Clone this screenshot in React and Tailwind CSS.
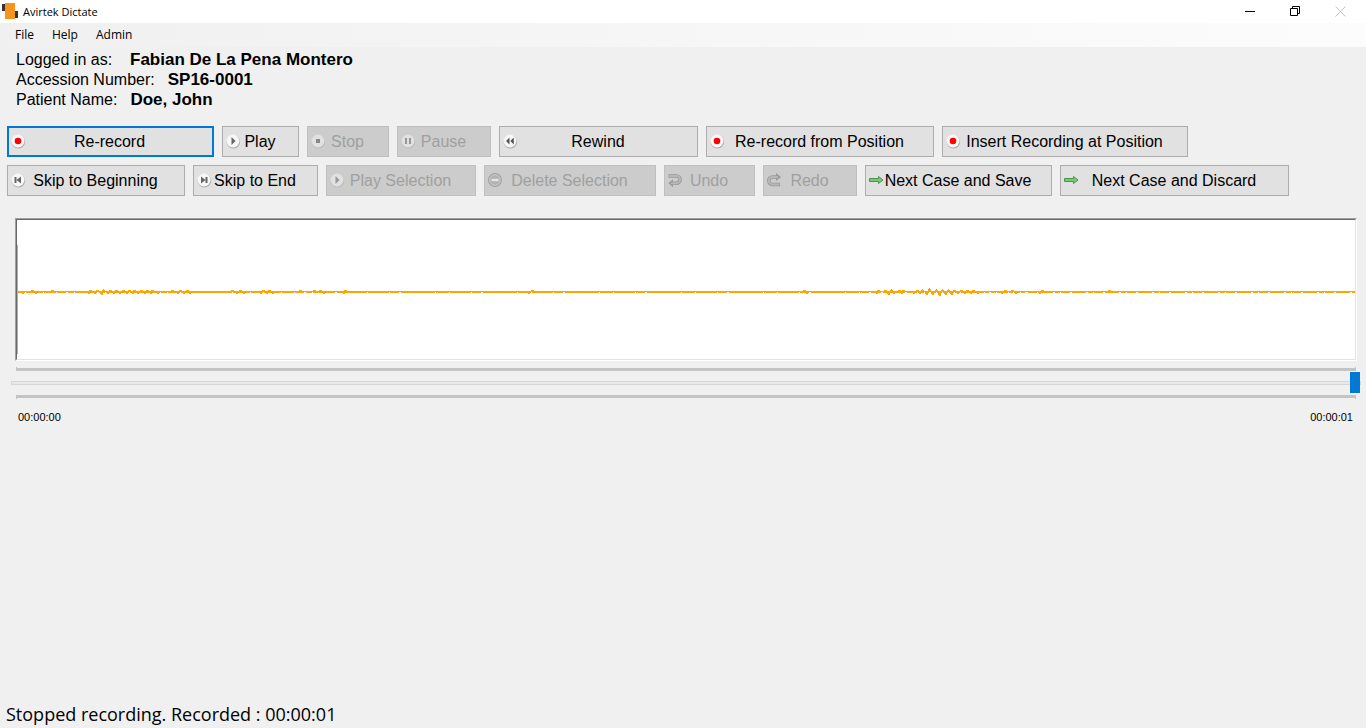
import React, { useState } from 'react';

// [x, height] of the samples above / below the centre line
const PEAKS = [
  [15, 1], [35, 1], [73, 1], [80, 1], [86, 2], [93, 1], [99, 1], [106, 1], [112, 1], [117, 1],
  [124, 1], [130, 1], [135, 1], [155, 1], [163, 1], [170, 1], [215, 1], [223, 1], [246, 1],
  [252, 1], [283, 1], [297, 1], [303, 1], [328, 1], [515, 1], [787, 1], [861, 1], [868, 1],
  [874, 2], [882, 1], [886, 1], [900, 1], [905, 2], [912, 3], [919, 2], [925, 2], [931, 2],
  [937, 1], [944, 1], [950, 1], [956, 1], [988, 1], [995, 1], [1025, 1], [1092, 1],
];
const DIPS = [
  [5, 1], [18, 1], [71, 1], [77, 1], [84, 2], [90, 1], [96, 1], [102, 1], [109, 1], [115, 1],
  [120, 1], [127, 1], [133, 1], [140, 1], [160, 1], [166, 1], [172, 1], [219, 1], [226, 1],
  [243, 1], [249, 1], [255, 1], [306, 1], [326, 1], [511, 1], [789, 1], [859, 1], [871, 2],
  [876, 1], [884, 1], [896, 1], [902, 1], [909, 2], [915, 2], [922, 3], [928, 2], [934, 2],
  [940, 1], [947, 1], [953, 1], [960, 1], [984, 1], [998, 1], [1022, 1],
];

const Waveform = () => (
  <svg
    className="block w-full h-[139px]"
    viewBox="0 0 1338 139"
    preserveAspectRatio="none"
    shapeRendering="crispEdges"
  >
    <rect x="0" y="25" width="1" height="109" fill="#ffa500" />
    <rect x="0" y="71" width="1338" height="2" fill="#ffa500" />
    {/* gaps in the lower half of the line */}
    <g stroke="#fff" strokeWidth="1">
      <path d="M8 72.5H180M215 72.5H330" strokeDasharray="1 9 2 6 1 12" />
      <path d="M350 72.5H850" strokeDasharray="1 21 1 9 2 34 1 13" />
      <path d="M852 72.5H1010" strokeDasharray="2 5 1 4" />
      <path d="M1010 72.5H1338" strokeDasharray="1 9 2 14 2 5" />
    </g>
    {PEAKS.map(([x, h]) => (
      <g key={x} fill="#ffa500">
        <rect x={x - 1} y="70" width="3" height="2" />
        {h > 1 && <rect x={x - 1} y={72 - h} width="3" height={h} />}
        {h > 1 && <rect x={x} y={71 - h} width="1" height="2" />}
      </g>
    ))}
    {DIPS.map(([x, h]) => (
      <g key={x} fill="#ffa500">
        <rect x={x - 1} y="72" width="4" height="1" />
        <rect x={x} y="72" width="2" height={h + 1} />
        {h > 1 && <rect x={x - 1} y="72" width="3" height={h} />}
      </g>
    ))}
  </svg>
);

const Disc = ({ children }) => (
  <svg className="w-4 h-4" viewBox="0 0 16 16">
    <circle cx="8.4" cy="8.8" r="6.8" fill="#ababab" />
    <circle cx="8" cy="8" r="6.5" fill="#f7f7f7" />
    {children}
  </svg>
);

const icons = {
  record: (
    <Disc>
      <circle cx="8" cy="8" r="3.3" fill="#ff0000" />
    </Disc>
  ),
  play: (
    <Disc>
      <path d="M6.5 4v8L10.5 8z" fill="#666" />
    </Disc>
  ),
  stop: (
    <Disc>
      <rect x="6" y="6" width="4" height="4" fill="#444" />
    </Disc>
  ),
  pause: (
    <Disc>
      <path d="M5 5h2v6H5zM9 5h2v6H9z" fill="#666" />
    </Disc>
  ),
  rewind: (
    <Disc>
      <path d="M7.5 4.5v7L4 8zM11.8 4.5v7L8.3 8z" fill="#555" />
    </Disc>
  ),
  begin: (
    <Disc>
      <path d="M4.5 5h2v6h-2zM11 4.5v7L6.5 8z" fill="#666" />
    </Disc>
  ),
  end: (
    <Disc>
      <path d="M9.5 5h2v6h-2zM5 4.5v7L9.5 8z" fill="#666" />
    </Disc>
  ),
  remove: (
    <svg className="w-4 h-4" viewBox="0 0 16 16">
      <circle cx="8" cy="8" r="6.4" fill="#999" stroke="#777" strokeWidth="1.1" />
      <circle cx="8" cy="8" r="5.3" fill="none" stroke="#d0d0d0" strokeWidth="0.9" />
      <rect x="4.5" y="6.8" width="7" height="2.4" fill="#fff" />
    </svg>
  ),
  undo: (
    <svg className="w-4 h-4" viewBox="0 0 16 16" fill="none">
      <path d="M1.5 4h8a3.3 3.3 0 0 1 0 7.2H5" stroke="#6a6a6a" strokeWidth="3.6" />
      <path d="M6 7.2v8L1.3 11.2z" fill="#6a6a6a" />
      <path d="M2.3 4h7.2a3.3 3.3 0 0 1 0 7.2H4" stroke="#a4a4a4" strokeWidth="2" />
    </svg>
  ),
  redo: (
    <svg className="w-4 h-4" viewBox="0 0 16 16" fill="none">
      <path d="M14 12.5H6.5a3.5 3.5 0 0 1 0-7.5H11" stroke="#6a6a6a" strokeWidth="3.6" />
      <path d="M10 1v8l5-4z" fill="#6a6a6a" />
      <path d="M13.2 12.5H6.5a3.5 3.5 0 0 1 0-7.5H12" stroke="#a4a4a4" strokeWidth="2" />
    </svg>
  ),
  next: (
    <svg className="w-4 h-4" viewBox="0 0 16 16">
      <path d="M1.5 6.5h9V4.5L15 8l-4.5 3.5v-2h-9z" fill="#7cc576" stroke="#3f8f3f" strokeWidth="0.9" />
    </svg>
  ),
};

const rowOne = [
  { label: 'Re-record', icon: 'record', width: 'w-[207px]', active: true },
  { label: 'Play', icon: 'play', width: 'w-[77px]' },
  { label: 'Stop', icon: 'stop', width: 'w-[82px]', disabled: true },
  { label: 'Pause', icon: 'pause', width: 'w-[94px]', disabled: true },
  { label: 'Rewind', icon: 'rewind', width: 'w-[199px]' },
  { label: 'Re-record from Position', icon: 'record', width: 'w-[228px]' },
  { label: 'Insert Recording at Position', icon: 'record', width: 'w-[246px]' },
];

const rowTwo = [
  { label: 'Skip to Beginning', icon: 'begin', width: 'w-[178px]' },
  { label: 'Skip to End', icon: 'end', width: 'w-[125px]' },
  { label: 'Play Selection', icon: 'play', width: 'w-[150px]', disabled: true },
  { label: 'Delete Selection', icon: 'remove', width: 'w-[172px]', disabled: true },
  { label: 'Undo', icon: 'undo', width: 'w-[91px]', disabled: true },
  { label: 'Redo', icon: 'redo', width: 'w-[94px]', disabled: true },
  { label: 'Next Case and Save', icon: 'next', width: 'w-[187px]' },
  { label: 'Next Case and Discard', icon: 'next', width: 'w-[229px]' },
];

const ToolButton = ({ label, icon, width, active, disabled }) => {
  let look = 'border border-[#adadad] bg-[#e1e1e1] text-black pl-[2px] pr-[3px]';
  if (active) look = 'border-2 border-[#0078d7] bg-[#e1e1e1] text-black pl-px pr-[3px]';
  if (disabled) look = 'border border-[#bfbfbf] bg-[#cccccc] text-[#a0a0a0] pl-[2px] pr-[3px]';

  return (
    <button
      disabled={disabled}
      className={`grid items-center h-[31px] text-base whitespace-nowrap ${width} ${look}`}
    >
      <span className={`col-start-1 row-start-1 pb-px ${disabled ? 'opacity-50' : ''}`}>{icons[icon]}</span>
      <span className="col-start-1 row-start-1 text-center">{label}</span>
    </button>
  );
};

const Info = ({ label, value }) => (
  <div className="flex">
    <dt className="min-w-[114px] pr-[13px]">{label}</dt>
    <dd className="text-[17px] font-bold">{value}</dd>
  </div>
);

const Ticks = ({ up }) => (
  <div className={`flex justify-between mx-[5px] h-1 border-[#c4c4c4] ${up ? 'border-b-3' : 'border-t-3'}`}>
    <span className={`w-px h-1 bg-[#c4c4c4] ${up ? '' : '-mt-[3px]'}`} />
    <span className={`w-px h-1 bg-[#c4c4c4] ${up ? '' : '-mt-[3px]'}`} />
  </div>
);

const App = () => {
  const [position, setPosition] = useState(100);

  return (
    <div className="min-h-screen flex flex-col bg-[#f0f0f0] text-black font-['Liberation_Sans',sans-serif]">
      {/* Title bar */}
      <header className="flex items-center justify-between h-[23px] bg-white">
        <div className="flex items-center gap-1 pl-[2px]">
          <svg className="w-[17px] h-[18px]" viewBox="0 0 17 18">
            <rect x="0" y="1" width="3" height="7" fill="#333" />
            <rect x="12" y="8" width="4" height="7" fill="#333" />
            <rect x="3" y="0" width="10" height="16" fill="#f7941e" />
          </svg>
          <h1 className="text-[11px] leading-4 font-['Open_Sans',sans-serif]">Avirtek Dictate</h1>
        </div>
        <div className="flex h-5 pr-[3px]">
          <button aria-label="Minimize" className="w-[45px] flex items-center justify-center">
            <svg className="w-[11px] h-[11px]" viewBox="0 0 11 11">
              <path d="M0 5.5h10" stroke="#000" />
            </svg>
          </button>
          <button aria-label="Restore" className="w-[45px] flex items-center justify-center">
            <svg className="w-[11px] h-[11px]" viewBox="0 0 11 11" fill="none" stroke="#000">
              <path d="M.5 2.5h7v7h-7zM2.5 2.5v-2h7v7h-2" />
            </svg>
          </button>
          <button aria-label="Close" className="w-[45px] flex items-center justify-center" disabled>
            <svg className="w-[11px] h-[11px]" viewBox="0 0 11 11">
              <path d="M.5.5l10 10M10.5.5l-10 10" stroke="#c4c4c4" />
            </svg>
          </button>
        </div>
      </header>

      {/* Menu */}
      <nav className="flex items-center gap-[18px] h-6 pl-[15px] bg-linear-to-r from-[#f0f0f0] to-[#fcfcfc] text-[12px] font-['Open_Sans',sans-serif]">
        <button>File</button>
        <button>Help</button>
        <button>Admin</button>
      </nav>

      <main className="flex-grow">
        <dl className="pl-4 pt-[3px] text-base leading-5">
          <Info label="Logged in as:" value="Fabian De La Pena Montero" />
          <Info label="Accession Number:" value="SP16-0001" />
          <Info label="Patient Name:" value="Doe, John" />
        </dl>

        <div className="flex flex-col gap-2 pl-[7px] pt-4">
          <div className="flex flex-wrap gap-2">
            {rowOne.map((b) => <ToolButton key={b.label} {...b} />)}
          </div>
          <div className="flex flex-wrap gap-2">
            {rowTwo.map((b) => <ToolButton key={b.label} {...b} />)}
          </div>
        </div>

        {/* Recording */}
        <div className="mt-[22px] ml-[15px] mr-[9px] border border-t-[#a0a0a0] border-l-[#a0a0a0] border-r-white border-b-white">
          <div className="bg-white border border-t-[#696969] border-l-[#696969] border-r-[#e3e3e3] border-b-[#e3e3e3]">
            <Waveform />
          </div>
        </div>

        <div className="pt-[6px] pl-[11px] pr-[5px]">
          <Ticks up />
          <input
            type="range"
            aria-label="Position"
            min="0"
            max="100"
            value={position}
            onChange={(e) => setPosition(e.target.value)}
            className="block w-full h-6 appearance-none bg-transparent outline-none [&::-webkit-slider-runnable-track]:h-1 [&::-webkit-slider-runnable-track]:border [&::-webkit-slider-runnable-track]:border-[#d6d6d6] [&::-webkit-slider-runnable-track]:bg-[#e7eaea] [&::-webkit-slider-thumb]:appearance-none [&::-webkit-slider-thumb]:w-[10px] [&::-webkit-slider-thumb]:h-[21px] [&::-webkit-slider-thumb]:-mt-[10px] [&::-webkit-slider-thumb]:bg-[#0078d7]"
          />
          <Ticks />
        </div>

        <div className="flex justify-between pl-[18px] pr-[13px] pt-[10px] text-[11px] leading-4">
          <span>00:00:00</span>
          <span>00:00:01</span>
        </div>
      </main>

      <footer className="pl-[6px] pb-[2px] text-[18px] leading-6 font-['Open_Sans',sans-serif]">
        Stopped recording. Recorded : 00:00:01
      </footer>
    </div>
  );
};

export default App;
